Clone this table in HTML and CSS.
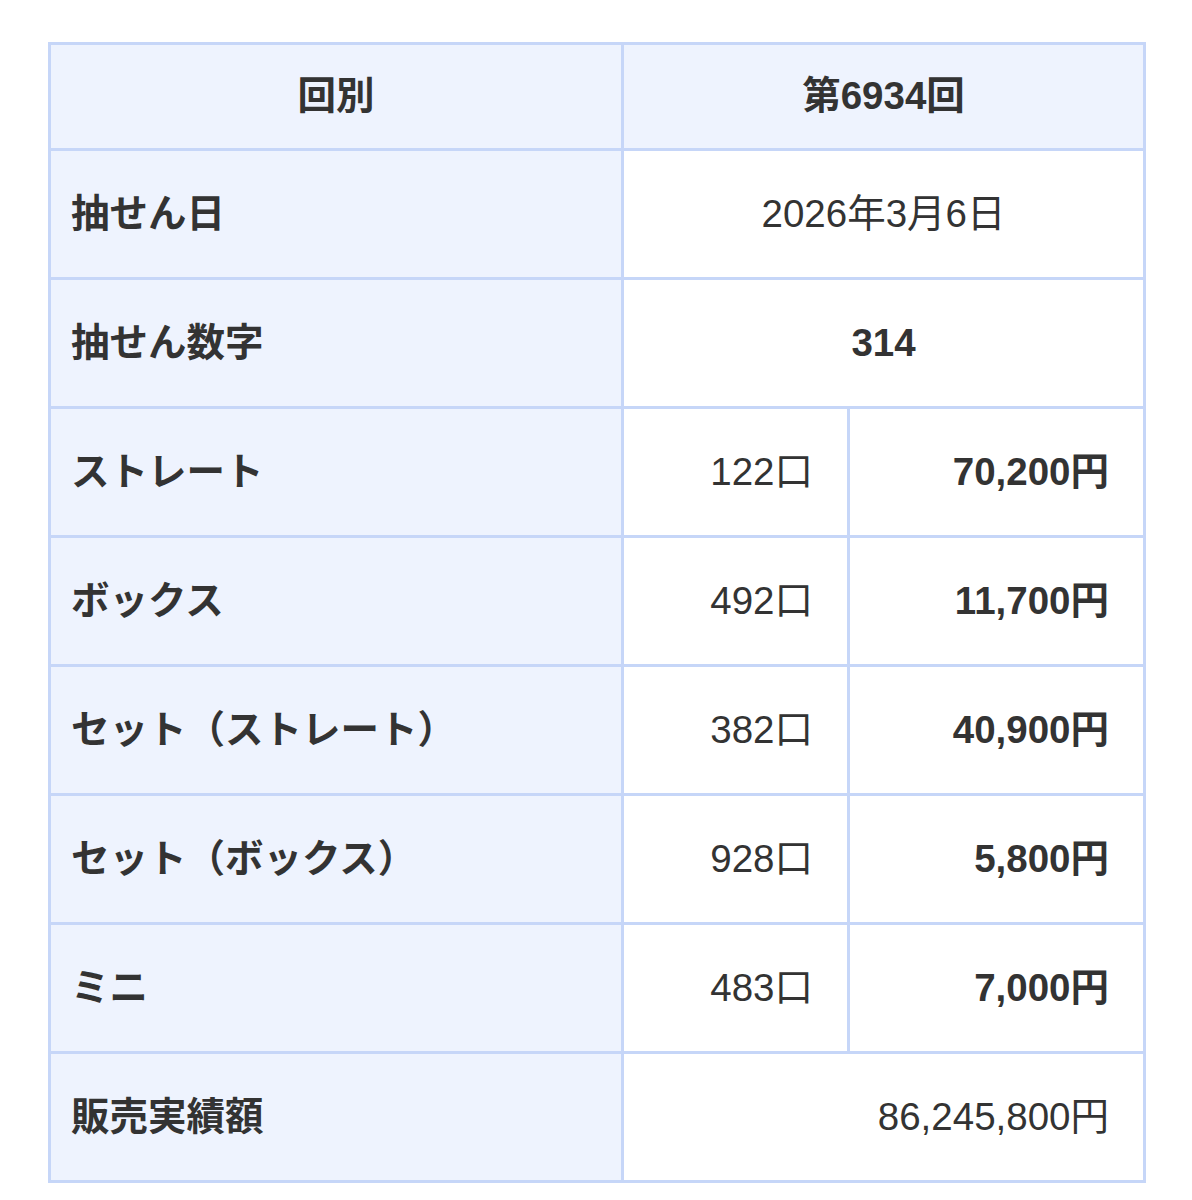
FILE: index.html
```html
<!DOCTYPE html>
<html lang="ja">
<head>
<meta charset="utf-8">
<title>第6934回</title>
<link rel="stylesheet" href="styles.css">
</head>
<body>
<table class="result">
  <colgroup>
    <col class="c1">
    <col class="c2">
    <col class="c3">
  </colgroup>
  <thead>
    <tr class="head">
      <th class="h">回別</th>
      <th class="h" colspan="2">第6934回</th>
    </tr>
  </thead>
  <tbody>
    <tr>
      <th class="label">抽せん日</th>
      <td class="center" colspan="2">2026年3月6日</td>
    </tr>
    <tr>
      <th class="label">抽せん数字</th>
      <td class="center bold" colspan="2">314</td>
    </tr>
    <tr>
      <th class="label">ストレート</th>
      <td class="num">122口</td>
      <td class="num bold">70,200円</td>
    </tr>
    <tr>
      <th class="label">ボックス</th>
      <td class="num">492口</td>
      <td class="num bold">11,700円</td>
    </tr>
    <tr>
      <th class="label">セット（ストレート）</th>
      <td class="num">382口</td>
      <td class="num bold">40,900円</td>
    </tr>
    <tr>
      <th class="label">セット（ボックス）</th>
      <td class="num">928口</td>
      <td class="num bold">5,800円</td>
    </tr>
    <tr>
      <th class="label">ミニ</th>
      <td class="num">483口</td>
      <td class="num bold">7,000円</td>
    </tr>
    <tr>
      <th class="label">販売実績額</th>
      <td class="num" colspan="2">86,245,800円</td>
    </tr>
  </tbody>
</table>
</body>
</html>
```

FILE: styles.css
```css
html, body {
  margin: 0;
  background: #ffffff;
}
body {
  padding: 42px 48px;
  font-family: "Liberation Sans", "Noto Sans CJK JP", sans-serif;
  font-size: 38.5px;
  color: #333333;
}
.result {
  border-collapse: collapse;
  table-layout: fixed;
  width: 1095px;
}
.c1 { width: 573px; }
.c2 { width: 226px; }
.c3 { width: 296px; }
.result th,
.result td {
  border: 3px solid #c6d6f8;
  padding: 0 34px 0 20px;
  vertical-align: middle;
  height: 126px;
  line-height: 1.2;
  white-space: nowrap;
}
.result .head th {
  height: 103px;
  background: #eef3fe;
  text-align: center;
  font-weight: bold;
  padding: 0 10px;
}
.label {
  background: #eef3fe;
  text-align: left;
  font-weight: bold;
}
.center {
  text-align: center;
}
.result td.center {
  padding: 0 10px;
}
.num {
  text-align: right;
}
.bold {
  font-weight: bold;
}
```
